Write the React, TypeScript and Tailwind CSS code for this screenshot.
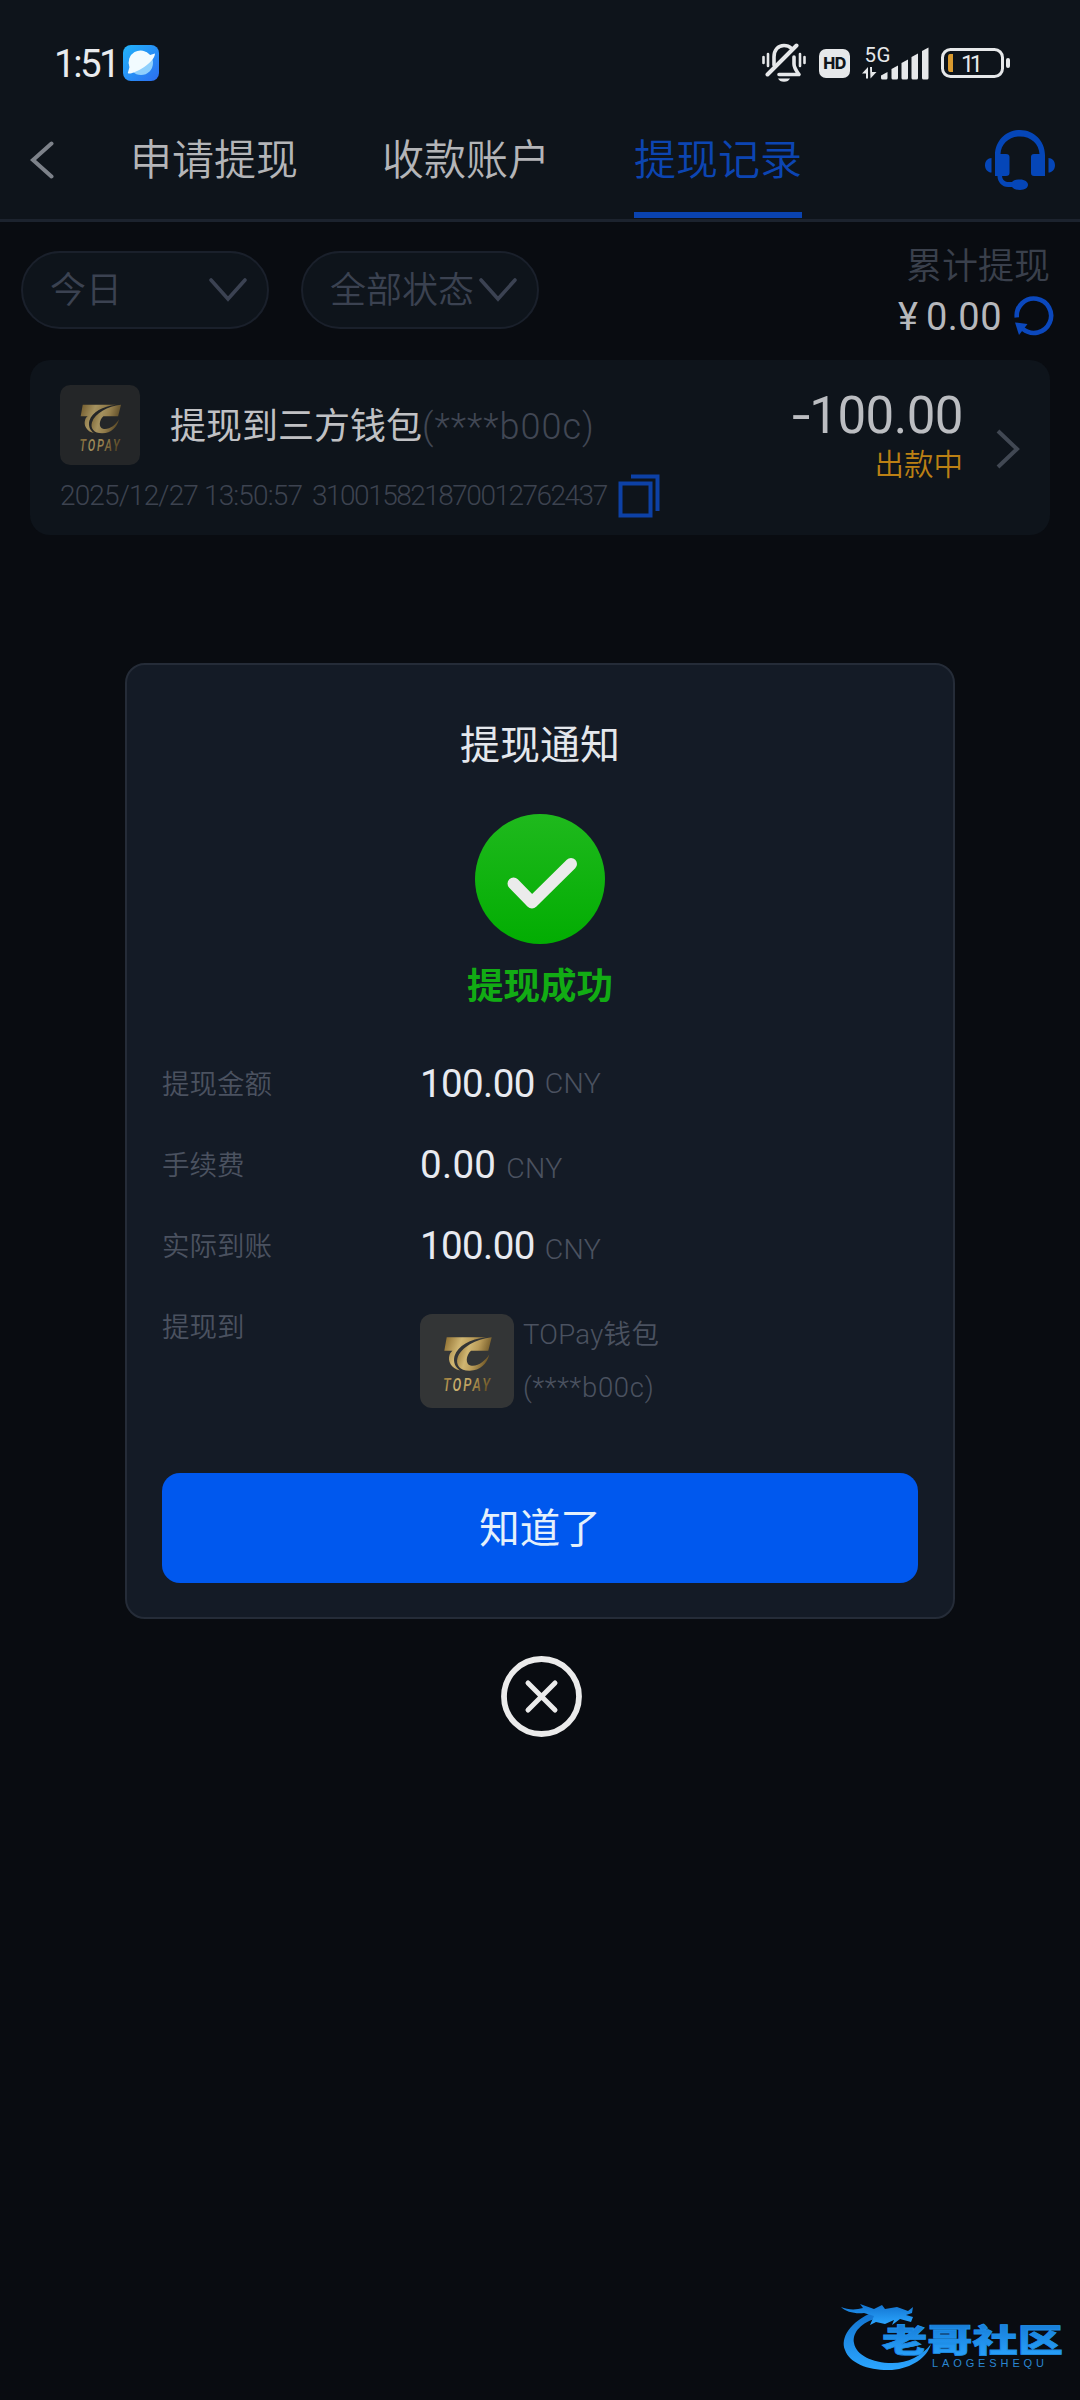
import type { ReactNode } from 'react';

const tabs = [
  { label: '申请提现', active: false },
  { label: '收款账户', active: false },
  { label: '提现记录', active: true },
];

const amounts = [
  { label: '提现金额', value: '100.00', valueClass: 'tracking-[-0.600px]', unitClass: 'mt-0' },
  { label: '手续费', value: '0.00', valueClass: 'tracking-[0.300px]', unitClass: 'mt-[8px]' },
  { label: '实际到账', value: '100.00', valueClass: 'tracking-[-0.600px]', unitClass: 'mt-[8px]' },
];

function TopayLogo({ size, id, dim = false }: { size: number; id: string; dim?: boolean }) {
  return (
    <svg width={size} height={size} viewBox="0 0 94 94" className="shrink-0 overflow-visible">
      <defs>
        <linearGradient id={id} x1="0" y1="0" x2="1" y2="0.3">
          <stop offset="0" stopColor="#8a6a2c" />
          <stop offset="0.4" stopColor="#d0b672" />
          <stop offset="0.65" stopColor="#b99b58" />
          <stop offset="1" stopColor="#6e5626" />
        </linearGradient>
      </defs>
      <rect width="94" height="94" rx="12" fill={dim ? '#242628' : '#333536'} />
      <g fill={`url(#${id})`} opacity={dim ? 0.75 : 1}>
        <path d="M26.700 23.300H66C50 25 38 32 34.500 42C33 48 35 53 40 56.500C31 54.500 27.500 47 29.500 41C30 39 31 38 32.500 36.700H24.300Z" />
        <path d="M71.700 23.300 68.300 36.700H51C46 41 45 50 50.500 51.500C58 53 65 47 69.300 40.500C67 50 60 56.500 50 56.700C40 57 35.500 51 37.500 44C41 33.500 56 25 71.700 23.300Z" />
        <text
          x="23"
          y="77.300"
          fontFamily="Roboto, sans-serif"
          fontSize="19"
          fontWeight="500"
          fontStyle="italic"
          letterSpacing="3"
          textLength="49"
          lengthAdjust="spacingAndGlyphs"
        >
          TOPAY
        </text>
      </g>
    </svg>
  );
}

function BrowserIcon() {
  return (
    <svg width="36" height="36" viewBox="0 0 36 36">
      <defs>
        <linearGradient id="browserBg" x1="0" y1="0" x2="1" y2="1">
          <stop offset="0" stopColor="#22b4fb" />
          <stop offset="1" stopColor="#2c6df0" />
        </linearGradient>
      </defs>
      <rect width="36" height="36" rx="8" fill="url(#browserBg)" />
      <circle cx="18" cy="18" r="12" fill="#8fd0fd" />
      <path d="M6.500 22A12 12 0 0 1 27 10L32 8.500C32 13 26 19.500 18 24C12 27.500 6 29.500 4.800 28Z" fill="#f2fbff" />
    </svg>
  );
}

function MutedBell() {
  return (
    <svg width="44" height="40" viewBox="0 0 44 40" fill="none" stroke="#e6e8ea" strokeLinecap="round">
      <path d="M1.500 14V20M6 11V23M38 11V23M42.500 14V20" strokeWidth="2.600" />
      <path d="M12 22V14C12 7 16 2.500 22 2.500C25 2.500 27.500 3.500 29 5" strokeWidth="3.600" />
      <path d="M32 14V21C32 25 34.500 28 37 31.500H17" strokeWidth="3.600" strokeLinejoin="round" />
      <path d="M34.500 2.500 5.500 31.500" strokeWidth="4" />
      <path d="M16 35.500H28C27 37.500 25 38.800 22 38.800S17 37.500 16 35.500Z" fill="#e6e8ea" stroke="none" />
    </svg>
  );
}

function Signal() {
  return (
    <svg width="67" height="36" viewBox="0 0 67 36" fill="#e6e8ea" className="overflow-visible">
      <text x="2.500" y="16.500" fontFamily="Roboto, sans-serif" fontSize="20.500" textLength="26">
        5G
      </text>
      <path d="M0 28.500 6 22V33.500H4V28.500ZM8 22H10V27H14.500L8.500 33.500Z" />
      <path d="M19 30.500 25.500 27V33Q25.500 34.500 24 34.500H20.500Q19 34.500 19 33Z" />
      <path d="M29.500 24 36 20.500V33Q36 34.500 34.500 34.500H31Q29.500 34.500 29.500 33Z" />
      <path d="M39.500 18 46 14.500V33Q46 34.500 44.500 34.500H41Q39.500 34.500 39.500 33Z" />
      <path d="M49.500 12 56 8.500V33Q56 34.500 54.500 34.500H51Q49.500 34.500 49.500 33Z" />
      <path d="M60 6 66.500 2.500V33Q66.500 34.500 65 34.500H61.500Q60 34.500 60 33Z" />
    </svg>
  );
}

function Battery() {
  return (
    <svg width="70" height="32" viewBox="0 0 70 32">
      <rect x="1.500" y="2.500" width="60" height="27" rx="8" fill="none" stroke="#e6e8ea" strokeWidth="3" />
      <rect x="65" y="11" width="4" height="10" rx="2" fill="#e6e8ea" />
      <path d="M9 7H12V25H9Q7 25 7 22V10Q7 7 9 7Z" fill="#d99a2f" />
      <text x="20" y="24.500" fill="#e6e8ea" fontFamily="Roboto, sans-serif" fontSize="23.500" textLength="22">
        11
      </text>
    </svg>
  );
}

function Headset() {
  return (
    <svg width="70" height="60" viewBox="0 0 70 60" fill="#0546b8">
      <path d="M10 46V25C10 11 21 0 35 0S60 11 60 25V46H49Q46 46 46 43V27Q46 24 49 24H54.500C54 14 46 6.500 35 6.500S16 14 15.500 24H21Q24.500 24 24.500 27V43Q24.500 46 21 46H17C17.500 50 20 52 24 52H27C28.500 50.500 31 49.500 35 49.500C40 49.500 43 52 43 54.800S40 60 35 60C31 60 28.500 59 27 57H23C17 57 12.500 52 12.500 46Z" />
      <path d="M6.500 28V42.500C3 42.500 0 39.500 0 35.200S3 28 6.500 28ZM63.500 28V42.500C67 42.500 70 39.500 70 35.200S67 28 63.500 28Z" />
    </svg>
  );
}

function ChevronDown() {
  return (
    <svg width="38" height="24" viewBox="0 0 38 24" fill="none" stroke="#3b4252" strokeWidth="3.600">
      <path d="M2 2 19 21 36 2" strokeLinecap="round" />
    </svg>
  );
}

function Filter({ className, children }: { className: string; children: ReactNode }) {
  return (
    <button
      className={`flex h-[78px] items-center justify-between rounded-full border-2 border-[#1a202b] bg-[#0e141b] pl-[27px] text-[36px] leading-none font-[350] text-[#3b4251] ${className}`}
    >
      <span className="pt-[2px]">{children}</span>
      <ChevronDown />
    </button>
  );
}

function StatusBar() {
  return (
    <div className="flex h-[102px] items-center pt-[24px] pr-[68px] pl-[54px]">
      <span className="w-[69px] pt-[2px] text-[38.5px] leading-none tracking-[-2.500px] text-[#e9ebee]">1:51</span>
      <BrowserIcon />
      <div className="mr-px ml-auto flex items-center">
        <MutedBell />
        <span className="ml-[13px] flex h-[29px] w-[31px] items-center justify-center rounded-[7px] bg-[#e6e8ea] font-[Inter] text-[16px] font-extrabold tracking-tight text-[#10151b]">
          HD
        </span>
        <span className="ml-[12px]">
          <Signal />
        </span>
        <span className="ml-[12px]">
          <Battery />
        </span>
      </div>
    </div>
  );
}

function Header() {
  return (
    <header className="h-[222px] border-b-[3px] border-[#1c232e] bg-[#0e141b]">
      <StatusBar />
      <nav className="flex h-[117px]">
        <svg className="mt-[39px] ml-[30px]" width="24" height="38" viewBox="0 0 24 38" fill="none">
          <path d="M21.500 2.500 3 19 21.500 35.500" stroke="#7d828a" strokeWidth="4" strokeLinecap="round" />
        </svg>
        <div className="ml-[76px] flex gap-[84px] text-[42px] leading-[60px]">
          {tabs.map((tab) => (
            <div
              key={tab.label}
              className={
                tab.active
                  ? 'h-[116px] border-b-[6px] border-[#0a43b0] pt-[29px] font-[350] text-[#0c45b2]'
                  : 'h-[116px] pt-[29px] font-[350] text-[#b4b5b8]'
              }
            >
              {tab.label}
            </div>
          ))}
        </div>
        <div className="mt-[28px] ml-[183px]">
          <Headset />
        </div>
      </nav>
    </header>
  );
}

function Filters() {
  return (
    <section className="flex h-[138px] items-start pt-[29px] pr-[26px] pl-[21px]">
      <Filter className="w-[248px] pr-[20px]">今日</Filter>
      <Filter className="ml-[32px] w-[238px] pr-[20px]">全部状态</Filter>
      <div className="-mt-[11px] ml-auto">
        <div className="pr-[4px] text-right text-[36px] leading-[54px] font-[350] text-[#3a404c]">累计提现</div>
        <div className="-mt-[1px] flex h-[48px] items-center justify-end">
          <span className="mr-[8px] text-[38px] text-[#b6b8bc]">¥</span>
          <span className="mr-[12px] text-[38px] tracking-[0.500px] text-[#b6b8bc]">0.00</span>
          <svg className="-mt-[2px]" width="40" height="40" viewBox="0 0 40 40" fill="none">
            <path d="M2.800 21.500A17.200 17.200 0 1 1 9 33" stroke="#0b48bd" strokeWidth="4.600" />
            <path d="M1 26.500 13.500 28 5 39Z" fill="#0b48bd" />
          </svg>
        </div>
      </div>
    </section>
  );
}

function RecordCard() {
  return (
    <article className="mx-[30px] flex h-[175px] rounded-[20px] bg-[#0e141b] px-[30px] pt-[25px]">
      <div>
        <div className="flex items-center">
          <TopayLogo size={80} id="goldSmall" dim />
          <div className="ml-[30px] flex items-baseline pt-[3px] text-[36px] leading-[52px]">
            <span className="text-[#c0c1c4]">提现到三方钱包</span>
            <span className="tracking-[1px] font-[350] text-[#414754]">(****b00c)</span>
          </div>
        </div>
        <div className="mt-[9px] flex h-[44px] items-center text-[28px] font-[350] text-[#3d4350]">
          <span className="w-[252px] tracking-[-0.850px]">2025/12/27 13:50:57</span>
          <span className="w-[306px] tracking-[-1.500px]">310015821870012762437</span>
          <svg width="42" height="44" viewBox="0 0 42 44" fill="none" stroke="#0d41a6" strokeWidth="4">
            <rect x="2.500" y="9.500" width="30" height="32" />
            <path d="M13 2.500H39.500V37" />
          </svg>
        </div>
      </div>
      <div className="-mr-[2px] ml-auto pt-[3px] text-right">
        <div className="text-[51px] leading-[56px] tracking-[-0.500px] text-[#bbbdc1]">
          <span className="inline-block origin-right scale-x-[1.3]">-</span>100.00
        </div>
        <div className="mt-[1px] text-[29.500px] leading-[40px] font-[350] text-[#bb8014]">出款中</div>
      </div>
      <svg className="mt-[44px] ml-[35px]" width="24" height="40" viewBox="0 0 24 40" fill="none">
        <path d="M2 2 21 20 2 38" stroke="#414853" strokeWidth="4" />
      </svg>
    </article>
  );
}

function NoticeDialog() {
  return (
    <div className="absolute inset-x-0 top-0 flex flex-col items-center pt-[663px]">
      <div
        role="dialog"
        className="flex h-[956px] w-[830px] flex-col items-center rounded-[20px] border-2 border-[#252c38] bg-[#141b26] px-[35px]"
      >
        <h2 className="mt-[51px] text-[40px] leading-[60px] text-[#e4e7ec]">提现通知</h2>
        <svg className="mt-[38px]" width="130" height="130" viewBox="0 0 130 130">
          <defs>
            <linearGradient id="okGreen" x1="0" y1="0" x2="0" y2="1">
              <stop offset="0" stopColor="#1fb91d" />
              <stop offset="1" stopColor="#02ad02" />
            </linearGradient>
          </defs>
          <circle cx="65" cy="65" r="65" fill="url(#okGreen)" />
          <path
            d="M38.500 69.500 57 88.500 96 50"
            fill="none"
            stroke="#ebebeb"
            strokeWidth="12"
            strokeLinecap="round"
            strokeLinejoin="round"
          />
        </svg>
        <div className="mt-[17px] text-[36.500px] leading-[52px] font-bold text-[#12ac14]">提现成功</div>

        <div className="mt-[31px] w-full">
          {amounts.map((row) => (
            <div key={row.label} className="flex h-[81px] items-center">
              <span className="mt-[1px] w-[258px] text-[27.500px] font-[350] text-[#4b5260]">{row.label}</span>
              <span className={`text-[38.500px] leading-none text-[#e8eaf0] ${row.valueClass}`}>{row.value}</span>
              <span
                className={`ml-[10px] text-[28.500px] leading-none tracking-[0.300px] font-[350] text-[#4b5260] ${row.unitClass}`}
              >
                CNY
              </span>
            </div>
          ))}
          <div className="mt-[27px] flex">
            <span className="-mt-[16px] w-[258px] text-[27.500px] leading-[60px] font-[350] text-[#4b5260]">提现到</span>
            <TopayLogo size={94} id="goldLarge" />
            <div className="-mt-[6px] ml-[9px] text-[27.500px] leading-[53px] font-[350] text-[#4b5260]">
              <div className="tracking-[0.300px]">TOPay钱包</div>
              <div className="tracking-[0.700px]">(****b00c)</div>
            </div>
          </div>
        </div>

        <button className="mt-auto mb-[34px] h-[110px] w-full rounded-[18px] bg-[#0058ee] pt-[2px] text-[40.500px] text-[#e4f0fb]">
          知道了
        </button>
      </div>

      <button className="mt-[37px] ml-[3px]" aria-label="close">
        <svg width="81" height="81" viewBox="0 0 81 81" fill="none" stroke="#ebebeb">
          <circle cx="40.500" cy="40.500" r="37.500" strokeWidth="5.800" />
          <path d="M27 27 54 54M54 27 27 54" strokeWidth="5" strokeLinecap="round" />
        </svg>
      </button>
    </div>
  );
}

function Watermark() {
  return (
    <svg className="absolute right-[16px] bottom-[24px]" width="224" height="74" viewBox="0 0 224 74">
      <defs>
        <linearGradient id="dragon" x1="0" y1="0" x2="0" y2="1">
          <stop offset="0" stopColor="#1273cf" />
          <stop offset="1" stopColor="#2ba6ff" />
        </linearGradient>
      </defs>
      <g fill="url(#dragon)">
        <path d="M33 10C10 20 0 36 5 48C10 62 30 69 52 68C72 66 87 56 91 42C82 54 68 61 52 61C32 61 16 53 14 41C12 30 22 20 38 16Z" />
        <path d="M1 5C8 8 16 8 23 6L20 2L34 7L42 3L45 7L57 5L68 9L73 5L72 11L66 13L73 15L71 20L60 17L52 23L54 18L45 22L36 20L30 23L34 14L24 11C15 12 6 10 1 5Z" />
        <text
          x="42"
          y="50"
          fontFamily="'Noto Sans CJK SC', sans-serif"
          fontSize="32"
          fontWeight="900"
          textLength="181"
          lengthAdjust="spacingAndGlyphs"
          stroke="#1f8fe8"
          strokeWidth="0.800"
        >
          老哥社区
        </text>
      </g>
      <text
        x="92"
        y="64.500"
        fill="#2a86d0"
        fontFamily="'Liberation Sans', sans-serif"
        fontSize="11"
        textLength="112"
        lengthAdjust="spacing"
      >
        LAOGESHEQU
      </text>
    </svg>
  );
}

export default function App() {
  return (
    <div className="relative h-[2400px] w-[1080px] overflow-hidden bg-[#090c11] font-[Roboto,'Noto_Sans_CJK_SC',sans-serif]">
      <Header />
      <Filters />
      <RecordCard />
      <NoticeDialog />
      <Watermark />
    </div>
  );
}
